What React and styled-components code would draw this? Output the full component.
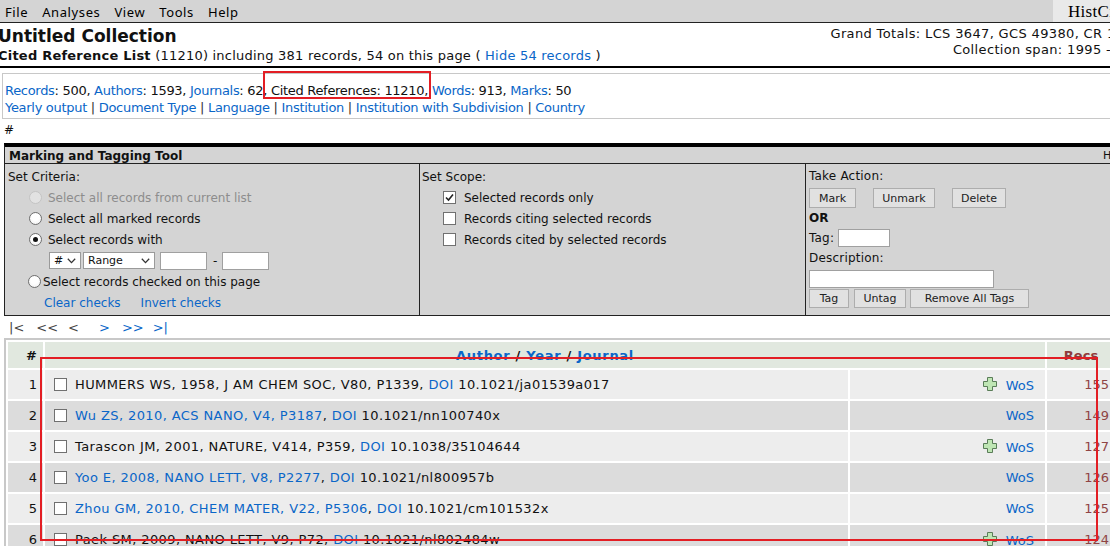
import React from 'react';
import styled, { createGlobalStyle } from 'styled-components';

const GlobalStyle = createGlobalStyle`
  html, body { margin: 0; padding: 0; background: #fff; }
  body {
    font-family: "DejaVu Sans", Verdana, sans-serif;
    font-size: 13px;
    color: #111;
  }
  * { box-sizing: border-box; }
`;

const BLUE = '#0a66c8';

const Viewport = styled.div`
  width: 100vw;
  height: 100vh;
  overflow: hidden;
`;

const Sheet = styled.div`
  width: 1152px;
`;

const MenuBar = styled.div`
  display: flex;
  height: 23px;
  background: #d4d4d4;
  border-bottom: 1px solid #222;
  font-family: "Noto Sans", "Open Sans", sans-serif;
  font-size: 13px;
  letter-spacing: 0.6px;
  color: #000;
`;

const Menus = styled.nav`
  flex: 1;
  display: flex;
  align-items: center;
  gap: 14px;
  padding: 1px 0 0 5px;
`;

const MenuItem = styled.span``;

const Brand = styled.div`
  width: 99px;
  background: #e9e9e9;
  display: flex;
  align-items: center;
  padding: 1px 0 0 15px;
  font-family: "Liberation Serif", "Times New Roman", serif;
  font-size: 17px;
  letter-spacing: 0.3px;
`;

const Header = styled.header`
  display: flex;
  justify-content: space-between;
  height: 45px;
  padding: 3px 2px 0 0;
  margin-left: -2px;
  border-bottom: 2px solid #000;
`;

const TitleBlock = styled.div`
  display: flex;
  flex-direction: column;
`;

const Title = styled.h1`
  margin: 0;
  font-size: 17px;
  line-height: 20px;
  font-weight: bold;
`;

const SubTitle = styled.div`
  line-height: 19px;
  letter-spacing: 0.22px;
  white-space: nowrap;
`;

const Strong = styled.b``;

const TotalsBlock = styled.div`
  display: flex;
  flex-direction: column;
  align-items: flex-end;
  line-height: 16px;
  letter-spacing: 0.35px;
  white-space: nowrap;
`;

const A = styled.a`
  color: ${BLUE};
  text-decoration: none;
  cursor: pointer;
`;

const StatsBox = styled.div`
  margin: 5px 0 0 2px;
  border: 1px solid #c8c8c8;
  padding: 8px 2px 2px;
  line-height: 17px;
  letter-spacing: -0.3px;
  white-space: nowrap;
`;

const StatLine = styled.div``;

const Sep = styled.span`
  color: #333;
`;

const Marked = styled.span`
  position: relative;
  &::after {
    content: '';
    position: absolute;
    left: 0px;
    right: -3px;
    top: -12px;
    bottom: -1px;
    border: 2px solid #e31e24;
    pointer-events: none;
  }
`;

const Hash = styled.div`
  margin-top: 3px;
  padding-left: 4px;
  line-height: 17px;
  font-size: 12px;
`;

const Tool = styled.section`
  margin: 4px 0 0 4px;
  width: 1146px;
  background: #d4d4d4;
  border-top: 4px solid #000;
  border-left: 1px solid #222;
  border-bottom: 1px solid #222;
  font-size: 12px;
`;

const ToolHead = styled.div`
  display: flex;
  justify-content: space-between;
  align-items: center;
  height: 17px;
  padding: 1px 22px 0 4px;
  border-bottom: 1px solid #222;
  font-weight: bold;
`;

const ToolHelp = styled.span`
  font-weight: normal;
  font-size: 11px;
`;

const ToolBody = styled.div`
  display: grid;
  grid-template-columns: 415px 386px 1fr;
  height: 151px;
`;

const Cell = styled.div`
  display: flex;
  flex-direction: column;
  padding: 2px 0 0 ${p => p.$pl || 0}px;
  border-right: ${p => (p.$last ? 'none' : '1px solid #222')};
`;

const Row = styled.div`
  display: flex;
  align-items: center;
  height: 21px;
  padding-left: ${p => p.$pl || 0}px;
  gap: ${p => p.$gap || 0}px;
  color: ${p => (p.$disabled ? '#8d8d8d' : 'inherit')};
  white-space: nowrap;
`;

const RadioCircle = styled.span`
  position: relative;
  flex: none;
  width: 13px;
  height: 13px;
  border-radius: 50%;
  border: 1px solid ${p => (p.$disabled ? '#c4c4c4' : '#6f6f6f')};
  background: ${p => (p.$disabled ? '#e2e2e2' : 'radial-gradient(circle at 50% 40%, #ffffff 40%, #ececec 100%)')};
  &::after {
    content: '';
    display: ${p => (p.$checked ? 'block' : 'none')};
    position: absolute;
    left: 3px;
    top: 3px;
    width: 5px;
    height: 5px;
    border-radius: 50%;
    background: #111;
  }
`;

const Box = styled.span`
  flex: none;
  display: inline-flex;
  align-items: center;
  justify-content: center;
  width: 13px;
  height: 13px;
  border: 1px solid #707070;
  background: #fff;
  vertical-align: -2px;
  margin-right: ${p => p.$mr || 0}px;
`;

const Check = ({ checked, mr }) => (
  <Box $mr={mr}>
    {checked && (
      <svg width="9" height="9" viewBox="0 0 9 9">
        <path d="M1 4.5 L3.5 7 L8 1.5" fill="none" stroke="#222" strokeWidth="1.6" />
      </svg>
    )}
  </Box>
);

const Radio = ({ checked, disabled }) => <RadioCircle $checked={checked} $disabled={disabled} />;

const Select = styled.span`
  flex: none;
  display: inline-flex;
  align-items: center;
  justify-content: space-between;
  width: ${p => p.$w}px;
  height: 17px;
  padding: 0 4px 0 4px;
  margin-left: ${p => p.$ml || 0}px;
  background: #fff;
  border: 1px solid #9a9a9a;
  font-size: 11px;
`;

const Chevron = () => (
  <svg width="9" height="6" viewBox="0 0 9 6">
    <path d="M0.8 0.8 L4.5 4.6 L8.2 0.8" fill="none" stroke="#333" strokeWidth="1.3" />
  </svg>
);

const TextInput = styled.input`
  flex: none;
  width: ${p => p.$w}px;
  height: 18px;
  padding: 0;
  margin: ${p => p.$m || '0'};
  background: #fff;
  border: 1px solid #a0a0a0;
  font: inherit;
`;

const Dash = styled.span`
  padding: 0 5px 0 6px;
`;

const ActionLine = styled.div`
  display: flex;
  align-items: center;
  height: ${p => p.$h}px;
  margin-top: ${p => p.$mt || 0}px;
  gap: ${p => p.$gap || 0}px;
  font-weight: ${p => (p.$bold ? 'bold' : 'normal')};
  letter-spacing: ${p => (p.$bold ? '0' : '0.2px')};
`;

const Btn = styled.button`
  width: ${p => p.$w}px;
  height: ${p => p.$h || 20}px;
  padding: 0;
  margin-right: ${p => p.$mr || 0}px;
  font-family: "DejaVu Sans", Verdana, sans-serif;
  font-size: 11px;
  color: #222;
  background: #e1e1e1;
  border: 1px solid #adadad;
`;

const Pager = styled.div`
  display: flex;
  margin-top: 3px;
  height: 18px;
  line-height: 18px;
`;

const PageLink = styled.span`
  margin-left: ${p => p.$ml}px;
  color: ${p => (p.$active ? BLUE : '#444')};
`;

const TableWrap = styled.div`
  position: relative;
  margin: 1px 0 0 4px;
`;

const Frame = styled.div`
  position: absolute;
  left: 36px;
  top: 19px;
  width: 1058px;
  height: 184px;
  border: 2px solid #e31e24;
  pointer-events: none;
`;

const Table = styled.table`
  table-layout: fixed;
  width: 1115px;
  border: 2px solid #c8c8c8;
  border-spacing: 2px;
`;

const Th = styled.th`
  height: 26px;
  padding: 0 ${p => p.$pr || 0}px 0 0;
  background: #e1e8df;
  text-align: ${p => p.$align || 'center'};
  font-weight: bold;
  letter-spacing: ${p => p.$ls || 0}px;
  color: ${p => p.$color || '#111'};
  white-space: nowrap;
`;

const Tr = styled.tr`
  background: ${p => (p.$odd ? '#ededed' : '#dcdcdc')};
`;

const Td = styled.td`
  height: 29px;
  padding: 0 ${p => p.$pr || 0}px 0 ${p => p.$pl || 0}px;
  text-align: ${p => p.$align || 'left'};
  color: ${p => p.$color || '#111'};
  letter-spacing: ${p => p.$ls || 0}px;
  white-space: nowrap;
  overflow: hidden;
`;

const PlusIcon = () => (
  <svg width="14" height="14" viewBox="0 0 14 14" style={{ verticalAlign: '-1px', marginRight: 9 }}>
    <path
      d="M4.5 0.5 H9.5 V4.5 H13.5 V9.5 H9.5 V13.5 H4.5 V9.5 H0.5 V4.5 H4.5 Z"
      fill="#bfe6b4"
      stroke="#5a7d58"
      strokeWidth="1"
    />
  </svg>
);

const rows = [
  { n: 1, text: 'HUMMERS WS, 1958, J AM CHEM SOC, V80, P1339, ', doi: '10.1021/ja01539a017', plus: true, recs: 155 },
  { n: 2, link: 'Wu ZS, 2010, ACS NANO, V4, P3187', doi: '10.1021/nn100740x', recs: 149 },
  { n: 3, text: 'Tarascon JM, 2001, NATURE, V414, P359, ', doi: '10.1038/35104644', plus: true, recs: 127 },
  { n: 4, link: 'Yoo E, 2008, NANO LETT, V8, P2277', doi: '10.1021/nl800957b', recs: 126 },
  { n: 5, link: 'Zhou GM, 2010, CHEM MATER, V22, P5306', doi: '10.1021/cm101532x', recs: 125 },
  { n: 6, text: 'Paek SM, 2009, NANO LETT, V9, P72, ', doi: '10.1021/nl802484w', plus: true, recs: 124 },
];

export default function App() {
  return (
    <Viewport>
      <GlobalStyle />
      <Sheet>
        <MenuBar>
          <Menus>
            <MenuItem>File</MenuItem>
            <MenuItem>Analyses</MenuItem>
            <MenuItem>View</MenuItem>
            <MenuItem>Tools</MenuItem>
            <MenuItem>Help</MenuItem>
          </Menus>
          <Brand>HistCite</Brand>
        </MenuBar>

        <Header>
          <TitleBlock>
            <Title>Untitled Collection</Title>
            <SubTitle>
              <Strong>Cited Reference List</Strong> (11210) including 381 records, 54 on this page ({' '}
              <A>Hide 54 records</A> )
            </SubTitle>
          </TitleBlock>
          <TotalsBlock>
            <span>Grand Totals: LCS 3647, GCS 49380, CR 11210</span>
            <span>Collection span: 1995 - 2011</span>
          </TotalsBlock>
        </Header>

        <StatsBox>
          <StatLine>
            <A>Records</A>: 500, <A>Authors</A>: 1593, <A>Journals</A>: 62
            <Marked>, Cited References: 11210,</Marked> <A>Words</A>: 913, <A>Marks</A>: 50
          </StatLine>
          <StatLine>
            <A>Yearly output</A> <Sep>|</Sep> <A>Document Type</A> <Sep>|</Sep> <A>Language</A> <Sep>|</Sep>{' '}
            <A>Institution</A> <Sep>|</Sep> <A>Institution with Subdivision</A> <Sep>|</Sep> <A>Country</A>
          </StatLine>
        </StatsBox>

        <Hash>#</Hash>

        <Tool>
          <ToolHead>
            <span>Marking and Tagging Tool</span>
            <ToolHelp>Help</ToolHelp>
          </ToolHead>
          <ToolBody>
            <Cell>
              <Row $pl={3}>Set Criteria:</Row>
              <Row $pl={24} $gap={6} $disabled>
                <Radio disabled />
                Select all records from current list
              </Row>
              <Row $pl={24} $gap={6}>
                <Radio />
                Select all marked records
              </Row>
              <Row $pl={24} $gap={6}>
                <Radio checked />
                Select records with
              </Row>
              <Row $pl={44}>
                <Select $w={32}>
                  #<Chevron />
                </Select>
                <Select $w={72} $ml={2}>
                  Range<Chevron />
                </Select>
                <TextInput $w={47} $m="0 0 0 5px" />
                <Dash>-</Dash>
                <TextInput $w={47} />
              </Row>
              <Row $pl={23} $gap={2}>
                <Radio />
                Select records checked on this page
              </Row>
              <Row $pl={39} $gap={20}>
                <A>Clear checks</A>
                <A>Invert checks</A>
              </Row>
            </Cell>

            <Cell>
              <Row $pl={2}>Set Scope:</Row>
              <Row $pl={23} $gap={8}>
                <Check checked />
                Selected records only
              </Row>
              <Row $pl={23} $gap={8}>
                <Check />
                Records citing selected records
              </Row>
              <Row $pl={23} $gap={8}>
                <Check />
                Records cited by selected records
              </Row>
            </Cell>

            <Cell $last $pl={3}>
              <ActionLine $h={20}>Take Action:</ActionLine>
              <ActionLine $h={20} $mt={2} $gap={17}>
                <Btn $w={47}>Mark</Btn>
                <Btn $w={62}>Unmark</Btn>
                <Btn $w={54}>Delete</Btn>
              </ActionLine>
              <ActionLine $h={20} $bold>OR</ActionLine>
              <ActionLine $h={20}>
                Tag:&nbsp;<TextInput $w={52} />
              </ActionLine>
              <ActionLine $h={20}>Description:</ActionLine>
              <ActionLine $h={19} $mt={1}>
                <TextInput $w={185} />
              </ActionLine>
              <ActionLine $h={19} $mt={1} $gap={5}>
                <Btn $w={40} $h={19}>Tag</Btn>
                <Btn $w={52} $h={19} $mr={-1}>Untag</Btn>
                <Btn $w={119} $h={19}>Remove All Tags</Btn>
              </ActionLine>
            </Cell>
          </ToolBody>
        </Tool>

        <Pager>
          <PageLink $ml={9}>|&lt;</PageLink>
          <PageLink $ml={12}>&lt;&lt;</PageLink>
          <PageLink $ml={10}>&lt;</PageLink>
          <PageLink $ml={20} $active>&gt;</PageLink>
          <PageLink $ml={12} $active>&gt;&gt;</PageLink>
          <PageLink $ml={9} $active>&gt;|</PageLink>
        </Pager>

        <TableWrap>
          <Table>
            <colgroup>
              <col style={{ width: 35 }} />
              <col style={{ width: 803 }} />
              <col style={{ width: 195 }} />
              <col style={{ width: 68 }} />
            </colgroup>
            <thead>
              <tr>
                <Th $align="right" $pr={6}>#</Th>
                <Th colSpan={2} $ls={0.7}>
                  <A>Author</A> / <A>Year</A> / <A>Journal</A>
                </Th>
                <Th $color="#8f3b3b">Recs</Th>
              </tr>
            </thead>
            <tbody>
              {rows.map(r => (
                <Tr key={r.n} $odd={r.n % 2 === 1}>
                  <Td $align="right" $pr={6}>{r.n}</Td>
                  <Td $pl={9} $ls={0.4}>
                    <Check mr={8} />
                    {r.link ? (
                      <>
                        <A>{r.link}</A>,{' '}
                      </>
                    ) : (
                      r.text
                    )}
                    <A>DOI</A> {r.doi}
                  </Td>
                  <Td $align="right" $pr={11}>
                    {r.plus && <PlusIcon />}
                    <A>WoS</A>
                  </Td>
                  <Td $align="right" $pr={6} $color="#8f4444">{r.recs}</Td>
                </Tr>
              ))}
            </tbody>
          </Table>
          <Frame />
        </TableWrap>
      </Sheet>
    </Viewport>
  );
}
